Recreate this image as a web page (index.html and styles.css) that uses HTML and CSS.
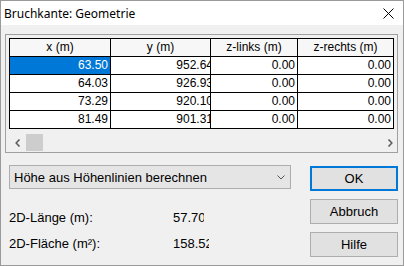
FILE: index.html
```html
<!DOCTYPE html>
<html>
<head>
	<title>Bruchkante: Geometrie</title>
	<link rel="stylesheet" href="styles.css">
</head>
<body>
	<div class="window">
		<div class="titlebar">
			<span class="title">Bruchkante: Geometrie</span>
			<svg class="close" width="11" height="11" viewBox="0 0 11 11">
				<path d="M0.5 0.5 L10.5 10.5 M10.5 0.5 L0.5 10.5" stroke="#000" stroke-width="1" fill="none"/>
			</svg>
		</div>
		<div class="content">
			<div class="grid-frame">
				<div class="grid">
					<div class="cell head">x (m)</div>
					<div class="cell head">y (m)</div>
					<div class="cell head">z-links (m)</div>
					<div class="cell head">z-rechts (m)</div>

					<div class="cell selected">63.50</div>
					<div class="cell cut"><span>952.64</span></div>
					<div class="cell">0.00</div>
					<div class="cell">0.00</div>

					<div class="cell">64.03</div>
					<div class="cell cut"><span>926.93</span></div>
					<div class="cell">0.00</div>
					<div class="cell">0.00</div>

					<div class="cell">73.29</div>
					<div class="cell cut"><span>920.10</span></div>
					<div class="cell">0.00</div>
					<div class="cell">0.00</div>

					<div class="cell">81.49</div>
					<div class="cell cut"><span>901.31</span></div>
					<div class="cell">0.00</div>
					<div class="cell">0.00</div>
				</div>
				<div class="hscroll">
					<div class="sb-btn">
						<svg width="6" height="8" viewBox="0 0 6 8"><path d="M4.5 0.5 L1.2 4 L4.5 7.5" stroke="#606060" stroke-width="1.6" fill="none"/></svg>
					</div>
					<div class="sb-thumb"></div>
					<div class="sb-track"></div>
					<div class="sb-btn right">
						<svg width="6" height="8" viewBox="0 0 6 8"><path d="M1.5 0.5 L4.8 4 L1.5 7.5" stroke="#606060" stroke-width="1.6" fill="none"/></svg>
					</div>
				</div>
			</div>
			<div class="lower">
				<div class="left">
					<div class="combo">
						<span>Höhe aus Höhenlinien berechnen</span>
						<svg width="8" height="5" viewBox="0 0 8 5"><path d="M0.5 0.5 L4 4 L7.5 0.5" stroke="#555" stroke-width="1" fill="none"/></svg>
					</div>
					<div class="info">
						<span class="label">2D-Länge (m):</span>
						<span class="value short">57.70</span>
					</div>
					<div class="info">
						<span class="label">2D-Fläche (m²):</span>
						<span class="value long">158.52</span>
					</div>
				</div>
				<div class="buttons">
					<button type="button" class="default">OK</button>
					<button type="button">Abbruch</button>
					<button type="button">Hilfe</button>
				</div>
			</div>
		</div>
	</div>
</body>
</html>
```

FILE: styles.css
```css
body {
	margin: 0;
}
.window {
	width: 404px;
	height: 266px;
	box-sizing: border-box;
	border: 1px solid #9a9a9a;
	background-color: #f0f0f0;
	font-family: "Liberation Sans", Arial, sans-serif;
	font-size: 13px;
	color: #000;
	overflow: hidden;
}
.titlebar {
	height: 24px;
	background-color: #fff;
	display: flex;
	align-items: center;
	justify-content: space-between;
	padding: 0 9px 0 3px;
}
.title {
	font-family: "Noto Sans", "Open Sans", sans-serif;
	font-size: 12px;
}
.content {
	padding: 9px 5px 0 4px;
}
.grid-frame {
	border: 1px solid #a0a0a0;
	padding: 3px 3px 1px 3px;
}
.grid {
	display: grid;
	grid-template-columns: 100px 99px 86px 95px;
	grid-auto-rows: 17px;
	gap: 1px;
	background-color: #000;
	border: 1px solid #000;
}
.cell {
	background-color: #fff;
	font-size: 12px;
	line-height: 17px;
	text-align: right;
	padding-right: 2px;
	overflow: hidden;
	white-space: nowrap;
}
.cell.head {
	background-color: #f7f7f7;
	text-align: center;
	padding-right: 0;
}
.cell.selected {
	background-color: #0078d7;
	color: #fff;
}
.cell.cut {
	padding-right: 0;
}
.cell.cut span {
	display: inline-block;
	margin-right: -3px;
}
.hscroll {
	display: flex;
	height: 17px;
	margin-top: 5px;
}
.sb-btn {
	width: 17px;
	display: flex;
	align-items: center;
	justify-content: center;
}
.sb-btn.right {
	justify-content: flex-end;
	padding-right: 1px;
}
.sb-thumb {
	width: 17px;
	background-color: #cdcdcd;
}
.sb-track {
	flex: 1;
}
.lower {
	display: flex;
	gap: 19px;
	margin-top: 12px;
	padding-left: 4px;
}
.left {
	width: 282px;
}
.combo {
	height: 24px;
	box-sizing: border-box;
	border: 1px solid #adadad;
	background-color: #e5e5e5;
	display: flex;
	align-items: center;
	justify-content: space-between;
	padding: 0 5px 0 4px;
}
.combo svg {
	margin-top: 1px;
}
.info {
	display: flex;
	height: 26px;
	align-items: center;
}
.info:first-of-type {
	margin-top: 15px;
}
.combo + .info {
	margin-top: 15px;
}
.label {
	width: 164px;
}
.value {
	overflow: hidden;
	white-space: nowrap;
}
.value.short {
	width: 31px;
}
.value.long {
	width: 36px;
}
.buttons {
	width: 88px;
	display: flex;
	flex-direction: column;
	gap: 8px;
	margin-top: 1px;
}
button {
	height: 25px;
	border: 1px solid #adadad;
	background-color: #e1e1e1;
	font-family: "Liberation Sans", Arial, sans-serif;
	font-size: 13px;
	color: #000;
	padding: 0;
}
button.default {
	border: 2px solid #0078d7;
}
```
